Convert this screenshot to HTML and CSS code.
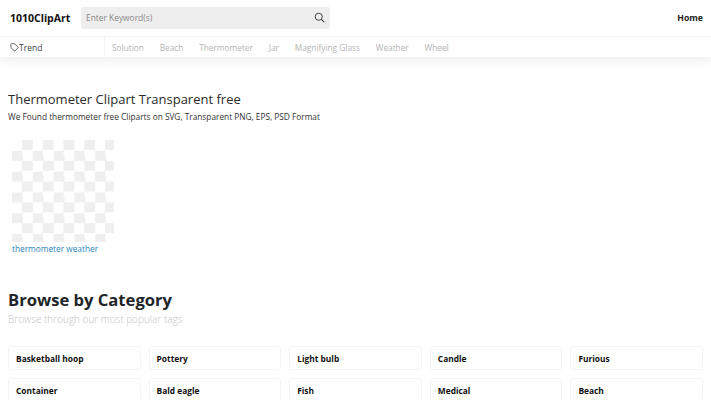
FILE: index.html
```html
<!DOCTYPE html>
<html lang="en">
<head>
<meta charset="utf-8">
<title>Thermometer Clipart Transparent free</title>
<link rel="stylesheet" href="styles.css">
</head>
<body>
<header class="masthead">
  <div class="topbar">
    <a class="logo">1010ClipArt</a>
    <div class="search">
      <span class="search-input">Enter Keyword(s)</span>
      <svg class="search-icon" viewBox="0 0 12 12" width="11" height="11" aria-hidden="true"><circle cx="5.2" cy="5.2" r="3.9" fill="none" stroke="#333" stroke-width="1"/><path d="M8 8l3.2 3.2" stroke="#333" stroke-width="1.1" fill="none"/></svg>
    </div>
    <a class="home">Home</a>
  </div>
  <nav class="tagbar">
    <div class="trend">
      <svg class="tag-icon" viewBox="0 0 10 10" width="9" height="9" aria-hidden="true"><path d="M.8 1.6 1.6.8h3.2l4.2 3.6v.8L5.6 8.8h-.8L1 5z" fill="none" stroke="#444" stroke-width=".9"/></svg><span>Trend</span>
    </div>
    <ul class="tags">
      <li>Solution</li><li>Beach</li><li>Thermometer</li><li>Jar</li><li>Magnifying Glass</li><li>Weather</li><li>Wheel</li>
    </ul>
  </nav>
</header>
<main>
  <section class="results">
    <h1>Thermometer Clipart Transparent free</h1>
    <p class="found">We Found thermometer free Cliparts on SVG, Transparent PNG, EPS, PSD Format</p>
    <figure class="clip">
      <div class="checker"></div>
      <figcaption>thermometer weather</figcaption>
    </figure>
  </section>
  <section class="browse">
    <h2>Browse by Category</h2>
    <p class="browse-sub">Browse through our most popular tags</p>
    <div class="cats">
      <a class="cat">Basketball hoop</a><a class="cat">Pottery</a><a class="cat">Light bulb</a><a class="cat">Candle</a><a class="cat">Furious</a>
      <a class="cat">Container</a><a class="cat">Bald eagle</a><a class="cat">Fish</a><a class="cat">Medical</a><a class="cat">Beach</a>
    </div>
  </section>
</main>
</body>
</html>
```
FILE: styles.css
```css
* { box-sizing: border-box; }
html, body { height: 400px; overflow: hidden; }
body { margin: 0; background: #fff; color: #212529; font-family: "Open Sans", sans-serif; }
.masthead { box-shadow: 0 3px 12px rgba(0,0,0,.08); height: 57px; }
.topbar { display: flex; align-items: center; height: 37px; padding: 0 8px 1px 10px; border-bottom: 1px solid #f4f4f4; }
.logo { width: 71px; font-size: 10.5px; font-weight: 700; color: #111; }
.search { display: flex; align-items: center; justify-content: space-between; width: 249px; height: 22px; padding: 0 5px; background: #eee; border-radius: 2px; }
.search-input { font-size: 8.4px; color: #888; }
.home { margin-left: auto; font-size: 8.7px; font-weight: 700; color: #222; }
.tagbar { display: flex; height: 20px; }
.trend { display: flex; align-items: center; width: 95px; margin-left: 10px; border-right: 1px solid #f4f4f4; font-size: 8.5px; color: #444; }
.tag-icon { flex: none; }
.tags { display: flex; align-items: center; gap: 15.8px; margin: 0; padding: 0 0 0 7px; list-style: none; font-size: 8.3px; color: #b4b4b4; }
main { padding: 0 8px; }
.results { height: 231px; padding-top: 33px; }
h1 { margin: 0; font-size: 13px; line-height: 18px; font-weight: 400; color: #2b2b2b; }
.found { margin: 2px 0 0; font-size: 8.3px; line-height: 14px; color: #333; }
.clip { margin: 16px 0 0 4px; width: 102px; }
.checker { width: 102px; height: 102px; background: repeating-conic-gradient(#efefef 0 25%, #fff 0 50%) 0 0 / 20.8px 20.8px; }
figcaption { font-size: 8.3px; line-height: 13px; color: #2a86c0; white-space: nowrap; }
h2 { margin: 0; font-size: 16.6px; line-height: 24px; font-weight: 700; color: #212529; }
.browse-sub { margin: 0; font-size: 10px; line-height: 15px; font-weight: 300; color: #c4c4c4; }
.cats { display: grid; grid-template-columns: repeat(5, 1fr); gap: 8px; margin-top: 19px; }
.cat { display: flex; align-items: center; height: 24px; padding-left: 7px; border: 1px solid #f4f4f4; border-radius: 3px; font-size: 8.4px; font-weight: 700; color: #111; }
```
